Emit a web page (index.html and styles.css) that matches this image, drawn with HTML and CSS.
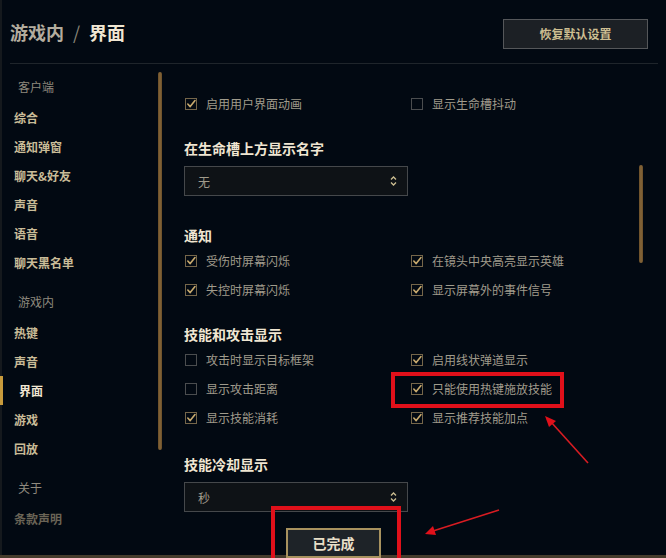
FILE: index.html
```html
<!DOCTYPE html>
<html lang="zh-CN">
<head>
<meta charset="utf-8">
<title>界面设置</title>
<link rel="stylesheet" href="styles.css">
</head>
<body>
<div class="page">
  <header class="header">
    <h1 class="title"><span class="crumb">游戏内</span><span class="slash">/</span><span class="current">界面</span></h1>
    <button class="btn-reset">恢复默认设置</button>
  </header>
  <div class="main">
    <nav class="sidebar">
      <div class="group-label">客户端</div>
      <div class="nav-item">综合</div>
      <div class="nav-item">通知弹窗</div>
      <div class="nav-item">聊天&amp;好友</div>
      <div class="nav-item">声音</div>
      <div class="nav-item">语音</div>
      <div class="nav-item">聊天黑名单</div>
      <div class="group-label later">游戏内</div>
      <div class="nav-item">热键</div>
      <div class="nav-item">声音</div>
      <div class="nav-item active">界面</div>
      <div class="nav-item">游戏</div>
      <div class="nav-item">回放</div>
      <div class="group-label later">关于</div>
      <div class="nav-item faded">条款声明</div>
    </nav>
    <div class="track track-left"><div class="thumb thumb-left"></div></div>
    <div class="content-col">
      <div class="scroll-area">
        <div class="settings">
          <div class="opts">
            <div class="opt"><svg class="cb" viewBox="0 0 12 12"><rect class="box on" x="0.5" y="0.5" width="11" height="11"/><path class="tick" d="M2.8 6 L5.2 8.6 L10 2.6"/></svg>启用用户界面动画</div>
            <div class="opt"><svg class="cb" viewBox="0 0 12 12"><rect class="box off" x="0.5" y="0.5" width="11" height="11"/></svg>显示生命槽抖动</div>
          </div>

          <h2 class="sec-title">在生命槽上方显示名字</h2>
          <div class="select"><span>无</span><svg class="updown" viewBox="0 0 7 12"><path d="M1 4.5 L3.5 2 L6 4.5 M1 7.5 L3.5 10 L6 7.5"/></svg></div>

          <h2 class="sec-title after-select">通知</h2>
          <div class="opts">
            <div class="opt"><svg class="cb" viewBox="0 0 12 12"><rect class="box on" x="0.5" y="0.5" width="11" height="11"/><path class="tick" d="M2.8 6 L5.2 8.6 L10 2.6"/></svg>受伤时屏幕闪烁</div>
            <div class="opt"><svg class="cb" viewBox="0 0 12 12"><rect class="box on" x="0.5" y="0.5" width="11" height="11"/><path class="tick" d="M2.8 6 L5.2 8.6 L10 2.6"/></svg>在镜头中央高亮显示英雄</div>
            <div class="opt"><svg class="cb" viewBox="0 0 12 12"><rect class="box on" x="0.5" y="0.5" width="11" height="11"/><path class="tick" d="M2.8 6 L5.2 8.6 L10 2.6"/></svg>失控时屏幕闪烁</div>
            <div class="opt"><svg class="cb" viewBox="0 0 12 12"><rect class="box on" x="0.5" y="0.5" width="11" height="11"/><path class="tick" d="M2.8 6 L5.2 8.6 L10 2.6"/></svg>显示屏幕外的事件信号</div>
          </div>

          <h2 class="sec-title">技能和攻击显示</h2>
          <div class="opts">
            <div class="opt"><svg class="cb" viewBox="0 0 12 12"><rect class="box off" x="0.5" y="0.5" width="11" height="11"/></svg>攻击时显示目标框架</div>
            <div class="opt"><svg class="cb" viewBox="0 0 12 12"><rect class="box on" x="0.5" y="0.5" width="11" height="11"/><path class="tick" d="M2.8 6 L5.2 8.6 L10 2.6"/></svg>启用线状弹道显示</div>
            <div class="opt"><svg class="cb" viewBox="0 0 12 12"><rect class="box off" x="0.5" y="0.5" width="11" height="11"/></svg>显示攻击距离</div>
            <div class="opt"><svg class="cb" viewBox="0 0 12 12"><rect class="box on" x="0.5" y="0.5" width="11" height="11"/><path class="tick" d="M2.8 6 L5.2 8.6 L10 2.6"/></svg>只能使用热键施放技能</div>
            <div class="opt"><svg class="cb" viewBox="0 0 12 12"><rect class="box on" x="0.5" y="0.5" width="11" height="11"/><path class="tick" d="M2.8 6 L5.2 8.6 L10 2.6"/></svg>显示技能消耗</div>
            <div class="opt"><svg class="cb" viewBox="0 0 12 12"><rect class="box on" x="0.5" y="0.5" width="11" height="11"/><path class="tick" d="M2.8 6 L5.2 8.6 L10 2.6"/></svg>显示推荐技能加点</div>
          </div>

          <h2 class="sec-title sec-last">技能冷却显示</h2>
          <div class="select"><span>秒</span><svg class="updown" viewBox="0 0 7 12"><path d="M1 4.5 L3.5 2 L6 4.5 M1 7.5 L3.5 10 L6 7.5"/></svg></div>
        </div>
        <div class="track track-right"><div class="thumb thumb-right"></div></div>
      </div>
      <footer class="footer">
        <button class="btn-done">已完成</button>
      </footer>
    </div>
  </div>
  <div class="baseline"></div>

  <div class="mark mark-option"></div>
  <div class="mark mark-done"></div>
  <svg class="arrows" viewBox="0 0 666 558">
    <line x1="588" y1="463" x2="551" y2="422"/>
    <polygon points="545,416 556,421 549,427"/>
    <line x1="499" y1="510" x2="433" y2="531"/>
    <polygon points="425,534 433,526 436,535"/>
  </svg>
</div>
</body>
</html>
```

FILE: styles.css
```css
* {
  box-sizing: border-box;
  margin: 0;
  padding: 0;
}

body {
  margin: 0;
  background: #010a13;
  font-family: "Noto Sans CJK SC", "Noto Sans", sans-serif;
}

.page {
  position: relative;
  width: 666px;
  height: 558px;
  overflow: hidden;
  background: #020912;
  box-shadow: inset 2px 0 0 #15191d;
}

/* Header */
.header {
  height: 64px;
  margin: 0 8px 0 10px;
  padding-right: 10px;
  border-bottom: 1px solid #1f252b;
  display: flex;
  justify-content: space-between;
  align-items: flex-start;
}

.title {
  margin-top: 20px;
  display: flex;
  font-size: 18px;
  line-height: 24px;
  font-weight: 700;
}

.crumb { color: #b3ac9e; }
.slash { color: #8a8578; font-weight: 400; margin: 0 9px; }
.current { color: #f0e6d2; }

.btn-reset {
  margin-top: 19px;
  width: 145px;
  height: 30px;
  border: 1px solid #55575a;
  background: #1c2025;
  color: #cdbe91;
  font: 700 12px/28px "Noto Sans CJK SC", sans-serif;
}

/* Main */
.main {
  display: flex;
  height: 491px;
}

.sidebar {
  width: 158px;
  padding-top: 8px;
  overflow: hidden;
}

.group-label {
  padding-left: 18px;
  font-size: 12px;
  line-height: 29px;
  color: #8f8a7e;
  margin-bottom: 2px;
}

.group-label.later { margin-top: 10px; }

.nav-item {
  position: relative;
  padding-left: 14px;
  font-size: 12px;
  font-weight: 700;
  line-height: 29px;
  color: #c9bc98;
}

.nav-item.active {
  padding-left: 19px;
  color: #f0e6d2;
}

.nav-item.active::before {
  content: "";
  position: absolute;
  left: 0;
  top: 0;
  width: 3px;
  height: 29px;
  background: #c89b3c;
}

.nav-item.faded { color: #6a6456; }

/* Scroll tracks */
.track { width: 4px; flex: none; }

.thumb {
  width: 4px;
  border-radius: 2px;
  background: linear-gradient(90deg, #6a4e28, #86673a 50%, #6a4e28);
}

.thumb-left { margin-top: 8px; height: 378px; }

.track-right { margin-right: 23px; }
.thumb-right { margin-top: 101px; height: 98px; }

/* Content */
.content-col {
  flex: 1;
  display: flex;
  flex-direction: column;
}

.scroll-area {
  height: 448px;
  display: flex;
  overflow: hidden;
}

.settings {
  flex: 1;
  padding: 25px 0 0 22px;
}

.opts {
  display: grid;
  grid-template-columns: 226px 1fr;
  grid-auto-rows: 29px;
}

.opt {
  display: flex;
  align-items: center;
  gap: 9px;
  font-size: 12px;
  color: #a09b8c;
  white-space: nowrap;
}

.cb {
  width: 12px;
  height: 12px;
  margin-left: 1px;
  flex: none;
  overflow: visible;
}

.box { fill: none; stroke-width: 1; }
.box.on { stroke: #75664a; }
.box.off { stroke: #4b4d4f; }
.tick {
  fill: none;
  stroke: #c8aa6e;
  stroke-width: 1.6;
  stroke-linecap: round;
  stroke-linejoin: round;
}

.sec-title {
  margin-top: 20px;
  margin-bottom: 1px;
  font-size: 14px;
  line-height: 20px;
  font-weight: 700;
  color: #f0e6d2;
}

.sec-title.after-select { margin-top: 29px; }
.sec-last { margin-top: 22px; }

.select {
  width: 224px;
  height: 30px;
  margin-top: 8px;
  padding: 0 10px 0 13px;
  border: 1px solid #45484b;
  background: #0e1216;
  display: flex;
  align-items: center;
  justify-content: space-between;
  font-size: 12px;
  color: #a09b8c;
}

.updown {
  width: 7px;
  height: 12px;
  fill: none;
  stroke: #cdbe91;
  stroke-width: 1.3;
}

/* Footer */
.footer {
  flex: 1;
  padding: 16px 0 0 124px;
}

.btn-done {
  position: relative;
  z-index: 2;
  width: 95px;
  height: 30px;
  margin-bottom: -3px;
  border: 2px solid #a8925f;
  background: #1e2328;
  color: #e8dfc8;
  font: 700 14px/26px "Noto Sans CJK SC", sans-serif;
}

.baseline {
  height: 3px;
  background: #463c2c;
}

/* Annotations */
.mark {
  position: absolute;
  border: 4px solid #e0101a;
  z-index: 5;
}

.mark-option { left: 391px; top: 372px; width: 173px; height: 36px; }
.mark-done { left: 271px; top: 506px; width: 130px; height: 60px; }

.arrows {
  position: absolute;
  left: 0;
  top: 0;
  width: 666px;
  height: 558px;
  z-index: 6;
  pointer-events: none;
}

.arrows line { stroke: #d81c22; stroke-width: 1.6; }
.arrows polygon { fill: #e0101a; }
```
